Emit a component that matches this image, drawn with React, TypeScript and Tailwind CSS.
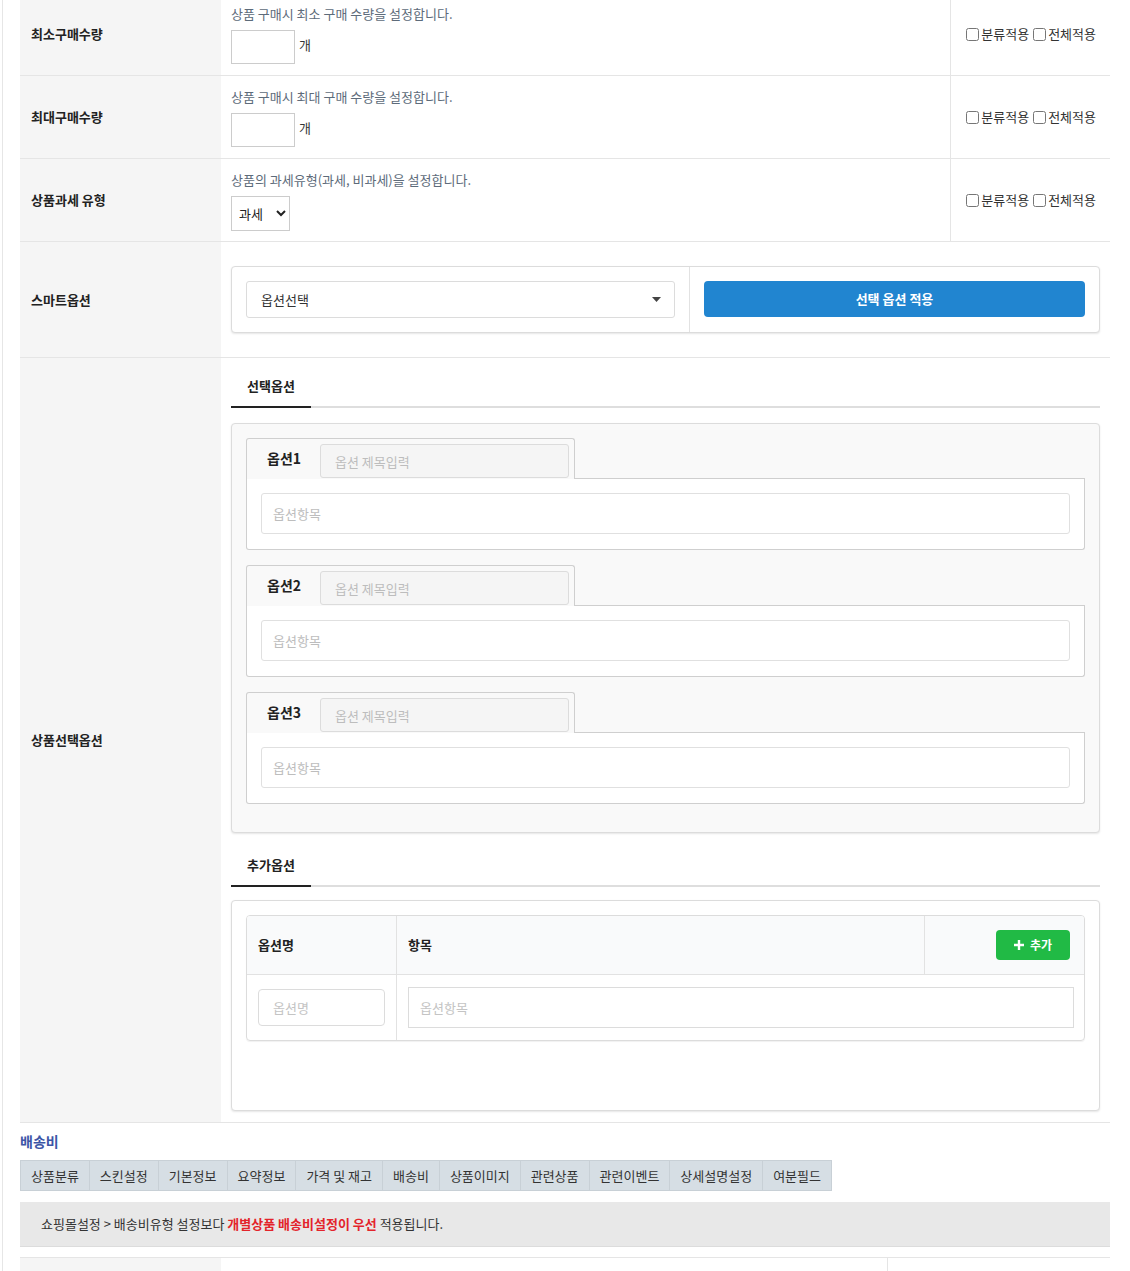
import React from 'react'

const font = { fontFamily: '"Noto Sans CJK KR", "Noto Sans", sans-serif' }

function ApplyChecks() {
  return (
    <div className="flex items-center justify-end gap-[4px] border-l border-[#e5e5e5] pr-[14px] text-[13px] text-[#333]">
      <label className="flex items-center gap-[2px]">
        <input type="checkbox" className="h-[13px] w-[13px]" />
        분류적용
      </label>
      <label className="flex items-center gap-[2px]">
        <input type="checkbox" className="h-[13px] w-[13px]" />
        전체적용
      </label>
    </div>
  )
}

function QtyRow({ label, desc, first }: { label: string; desc: string; first?: boolean }) {
  return (
    <div className={`grid grid-cols-[201px_729px_160px] border-b border-[#e5e5e5] ${first ? '-mt-[7px]' : ''}`}>
      <div className="flex items-center bg-[#f5f5f5] pl-[11px] text-[13px] font-bold text-[#222]">{label}</div>
      <div className="pl-[10px] pt-[11px] pb-[11px]">
        <div className="text-[13px] leading-[20px] text-[#5d6b7a]">{desc}</div>
        <div className="mt-[6px] flex items-center">
          <input className="h-[34px] w-[64px] border border-[#ccc] bg-white" />
          <span className="ml-[4px] -mt-[4px] text-[13px] text-[#333]">개</span>
        </div>
      </div>
      <ApplyChecks />
    </div>
  )
}

function OptionGroup({ n }: { n: number }) {
  return (
    <div className="mb-[15px]">
      <div className="flex">
        <div className="flex h-[41px] w-[329px] items-start rounded-t-[3px] border-x border-t border-[#cfcfcf] pt-[5px] pr-[5px]">
          <div className="w-[73px] pl-[20px] pt-[4px] text-[14px] font-bold leading-[20px] text-[#222]">옵션{n}</div>
          <input
            placeholder="옵션 제목입력"
            className="h-[34px] flex-1 rounded-[3px] border border-[#dcdcdc] bg-[#f5f5f5] px-[14px] text-[13px] placeholder:text-[#bdbdbd]"
          />
        </div>
        <div className="flex-1 border-b border-[#cfcfcf]" />
      </div>
      <div className="rounded-b-[3px] border-x border-b border-[#cfcfcf] bg-white px-[14px] pt-[14px] pb-[15px]">
        <input
          placeholder="옵션항목"
          className="h-[41px] w-full rounded-[3px] border border-[#e0e0e0] bg-white px-[11px] text-[13px] placeholder:text-[#bdbdbd]"
        />
      </div>
    </div>
  )
}

function TabHeader({ title }: { title: string }) {
  return (
    <div className="flex border-b-2 border-[#dedede]">
      <div className="-mb-[2px] h-[33px] w-[80px] border-b-2 border-[#222] text-center text-[13px] font-bold leading-[22px] text-[#222]">
        {title}
      </div>
    </div>
  )
}

const tabs = ['상품분류', '스킨설정', '기본정보', '요약정보', '가격 및 재고', '배송비', '상품이미지', '관련상품', '관련이벤트', '상세설명설정', '여분필드']

export default function App() {
  return (
    <div className="min-h-screen overflow-hidden bg-white" style={font}>
      <div className="ml-[2px] border-l border-[#e6e6e6] pl-[17px]">
        <div className="w-[1090px]">
          <QtyRow first label="최소구매수량" desc="상품 구매시 최소 구매 수량을 설정합니다." />
          <QtyRow label="최대구매수량" desc="상품 구매시 최대 구매 수량을 설정합니다." />

          {/* 과세 */}
          <div className="grid grid-cols-[201px_729px_160px] border-b border-[#e5e5e5]">
            <div className="flex items-center bg-[#f5f5f5] pl-[11px] text-[13px] font-bold text-[#222]">상품과세 유형</div>
            <div className="pl-[10px] pt-[11px] pb-[10px]">
              <div className="text-[13px] leading-[20px] text-[#5d6b7a]">상품의 과세유형(과세, 비과세)을 설정합니다.</div>
              <select className="mt-[6px] h-[35px] w-[59px] border border-[#ccc] bg-white pl-[3px] text-[13px] text-[#222]">
                <option>과세</option>
                <option>비과세</option>
              </select>
            </div>
            <ApplyChecks />
          </div>

          {/* 스마트옵션 */}
          <div className="grid grid-cols-[201px_1fr] border-b border-[#e5e5e5]">
            <div className="flex items-center bg-[#f5f5f5] pl-[11px] text-[13px] font-bold text-[#222]">스마트옵션</div>
            <div className="py-[24px] pl-[10px] pr-[10px]">
              <div className="flex h-[67px] rounded-[4px] border border-[#dcdcdc] bg-white shadow-[0_1px_2px_rgba(0,0,0,0.1)]">
                <div className="w-[458px] border-r border-[#e2e2e2] p-[14px]">
                  <div className="flex h-[37px] items-center justify-between rounded-[3px] border border-[#dcdcdc] pl-[14px] pr-[13px] text-[13px] text-[#333]">
                    옵션선택
                    <svg width="9" height="5" viewBox="0 0 9 5"><path d="M0 0h9L4.5 5z" fill="#444" /></svg>
                  </div>
                </div>
                <div className="flex-1 p-[14px]">
                  <button className="h-[36px] w-full rounded-[4px] bg-[#2185d0] text-[13px] font-bold text-white">선택 옵션 적용</button>
                </div>
              </div>
            </div>
          </div>

          {/* 상품선택옵션 */}
          <div className="grid grid-cols-[201px_1fr] border-b border-[#e5e5e5]">
            <div className="flex items-center bg-[#f5f5f5] pl-[11px] text-[13px] font-bold text-[#222]">상품선택옵션</div>
            <div className="pt-[17px] pb-[11px] pl-[10px] pr-[10px]">
              <TabHeader title="선택옵션" />
              <div className="mt-[15px] rounded-[4px] border border-[#dcdcdc] bg-[#f9f9f9] px-[14px] pt-[14px] pb-[13px] shadow-[0_1px_2px_rgba(0,0,0,0.1)]">
                <OptionGroup n={1} />
                <OptionGroup n={2} />
                <OptionGroup n={3} />
              </div>

              <div className="mt-[21px]">
                <TabHeader title="추가옵션" />
              </div>
              <div className="mt-[13px] h-[211px] rounded-[4px] border border-[#dcdcdc] bg-white p-[14px] shadow-[0_1px_2px_rgba(0,0,0,0.1)]">
                <div className="overflow-hidden rounded-[4px] border border-[#dcdcdc] shadow-[0_1px_1px_rgba(0,0,0,0.06)]">
                  <div className="flex h-[59px] border-b border-[#e2e2e2] bg-[#f9fafb] text-[13px] font-bold text-[#222]">
                    <div className="flex w-[150px] items-center border-r border-[#e2e2e2] pl-[11px]">옵션명</div>
                    <div className="flex flex-1 items-center border-r border-[#e2e2e2] pl-[11px]">항목</div>
                    <div className="flex w-[159px] items-center justify-end pr-[14px]">
                      <button className="flex h-[30px] w-[74px] items-center justify-center gap-[6px] rounded-[4px] bg-[#21ba45] text-[12px] font-bold text-white">
                        <svg width="10" height="10" viewBox="0 0 10 10"><path d="M3.8 0h2.4v3.8H10v2.4H6.2V10H3.8V6.2H0V3.8h3.8z" fill="#fff" /></svg>
                        추가
                      </button>
                    </div>
                  </div>
                  <div className="flex h-[65px] items-center">
                    <div className="flex h-full w-[150px] items-center border-r border-[#e2e2e2] pl-[11px]">
                      <input
                        placeholder="옵션명"
                        className="h-[37px] w-[127px] rounded-[4px] border border-[#dcdcdc] px-[14px] text-[13px] placeholder:text-[#c4c4c4]"
                      />
                    </div>
                    <div className="flex h-full flex-1 items-center pl-[11px] pr-[10px]">
                      <input
                        placeholder="옵션항목"
                        className="h-[41px] w-full border border-[#dcdcdc] px-[11px] text-[13px] placeholder:text-[#c4c4c4]"
                      />
                    </div>
                  </div>
                </div>
              </div>
            </div>
          </div>

          {/* 배송비 */}
          <div className="mt-[8px] text-[14px] font-bold leading-[20px] text-[#3b55a6]">배송비</div>
          <div className="mt-[9px] flex">
            <div className="flex h-[31px] border border-[#c8d0d6] bg-[#d6dee4]">
              {tabs.map((t, i) => (
                <div
                  key={t}
                  className={`flex items-center px-[10px] text-[13px] text-[#333] ${i < tabs.length - 1 ? 'border-r border-[#c8d0d6]' : ''}`}
                >
                  {t}
                </div>
              ))}
            </div>
          </div>
          <div className="mt-[11px] flex h-[45px] items-center border-b border-[#dcdcdc] bg-[#e8e8e8] pl-[21px] text-[13px] text-[#333]">
            쇼핑몰설정 &gt; 배송비유형 설정보다&nbsp;<b className="text-[#e3242b]">개별상품 배송비설정이 우선</b>&nbsp;적용됩니다.
          </div>
          <div className="mt-[10px] grid h-[40px] grid-cols-[201px_667px_1fr] border-t border-[#e5e5e5]">
            <div className="bg-[#f5f5f5]" />
            <div className="border-r border-[#e5e5e5]" />
            <div />
          </div>
        </div>
      </div>
    </div>
  )
}
